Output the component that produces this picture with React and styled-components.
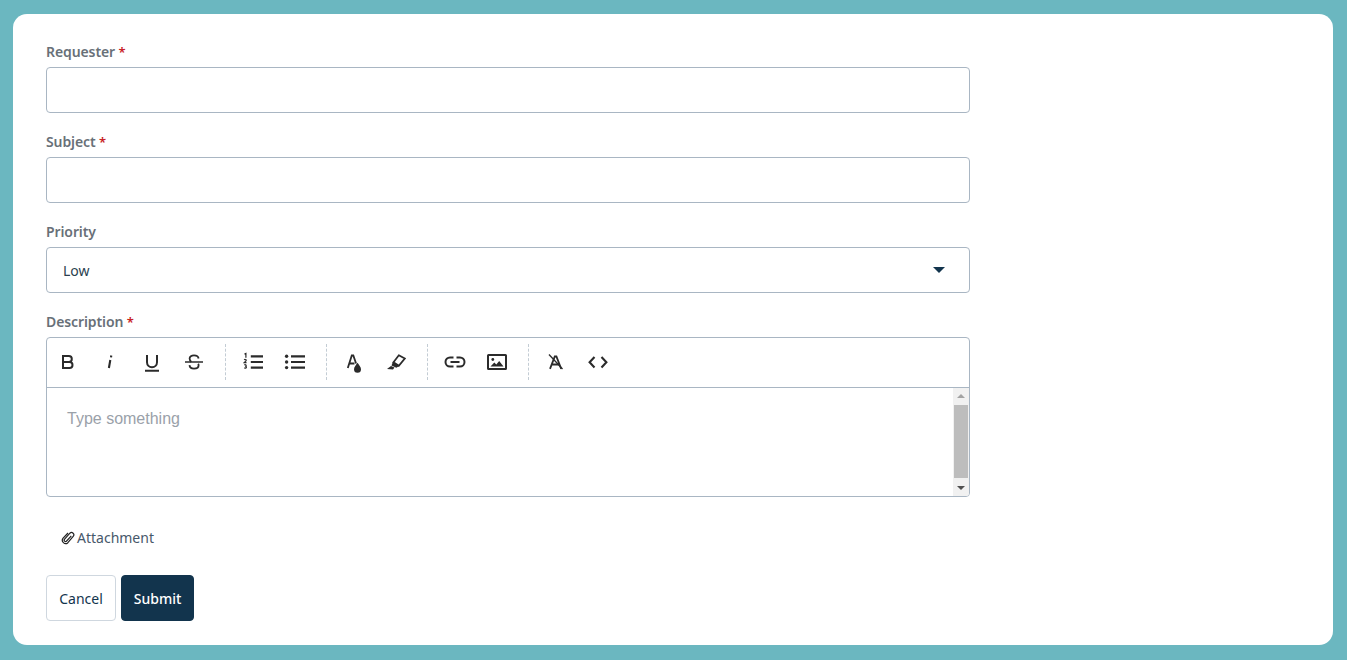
import React from "react";
import styled, { createGlobalStyle } from "styled-components";

const GlobalStyle = createGlobalStyle`
  html, body {
    margin: 0;
    height: 100%;
    background: #6bb7c0;
    font-family: "Noto Sans", "Open Sans", sans-serif;
    overflow: hidden;
  }
`;

const ICON_COLOR = "#2b2b2b";

const Svg = ({ children }) => (
  <svg width="24" height="24" viewBox="0 0 24 24" fill="none" stroke={ICON_COLOR} strokeWidth="2">
    {children}
  </svg>
);

const icons = {
  bold: (
    <Svg>
      <path d="M7 6h5.800a3 3 0 0 1 0 6H7zM7 12h6.500a3 3 0 0 1 0 6H7z" />
    </Svg>
  ),
  italic: (
    <Svg>
      <path d="M12.300 10 10.900 18M13.300 5.500l-.3 1.900" strokeWidth="2.100" />
    </Svg>
  ),
  underline: (
    <Svg>
      <path d="M7 5v7.200a5 5 0 0 0 10 0V5" />
      <path d="M5 20.700h14" />
    </Svg>
  ),
  strike: (
    <Svg>
      <path d="M3 12h18" strokeWidth="1.600" />
      <path d="M16.600 8.500C16.300 6.500 14.400 5.300 12 5.300c-2.500 0-4.400 1.300-4.400 3.200 0 1.300.6 2.400 1.700 3.500M7.500 15.200c.2 2.200 2.100 3.500 4.500 3.500 2.600 0 4.600-1.300 4.600-3.400 0-.6-.1-1.100-.4-1.600" strokeWidth="1.800" />
    </Svg>
  ),
  ordered: (
    <Svg>
      <path d="M9.800 6.300H22M9.800 12H22M9.800 17.600H22" strokeWidth="2.200" />
      <path d="M3.500 4.100 4.900 3.500v4.300M3.200 9.900c.4-.7 2.200-.6 2 .5-.1.700-1.500 1.400-2.100 2.300h2.400M3.300 15c.7-.5 2-.3 1.900.6 0 .5-.5.7-1 .7.700 0 1.200.3 1.200.9 0 1-1.500 1.200-2.200.6" strokeWidth="1.200" />
    </Svg>
  ),
  bullet: (
    <Svg>
      <path d="M8 6.300h14M8 12h14M8 17.600h14" strokeWidth="2.200" />
      <circle cx="3.600" cy="6.300" r="1.700" fill={ICON_COLOR} stroke="none" />
      <circle cx="3.600" cy="12" r="1.700" fill={ICON_COLOR} stroke="none" />
      <circle cx="3.600" cy="17.600" r="1.700" fill={ICON_COLOR} stroke="none" />
    </Svg>
  ),
  color: (
    <Svg>
      <path d="M5.800 18 9.800 5.500h1.500l2.800 8M7.500 13.500h5" strokeWidth="1.800" />
      <path d="M15.500 12.800c1.300 2.200 3.500 4 3.500 6.400a3.500 3.500 0 0 1-7 0c0-2.400 2.100-4.200 3.500-6.400z" fill={ICON_COLOR} stroke="none" />
    </Svg>
  ),
  highlight: (
    <Svg>
      <path d="M14.800 5.300 20.800 8.500l-6 7.300-5.300-3.600z" strokeWidth="1.800" />
      <path d="M8.900 11.700 15.200 16l-2.800 1.800-4.900-2.300z" fill={ICON_COLOR} stroke="none" />
      <path d="M7 16 3 19l6 .4 1.500-1.800z" fill={ICON_COLOR} stroke="none" />
    </Svg>
  ),
  link: (
    <Svg>
      <path d="M10.500 7.500H7a4.500 4.500 0 0 0 0 9h3.500M13.500 7.500H17a4.500 4.500 0 0 1 0 9h-3.500" />
      <path d="M7.500 12h9" />
    </Svg>
  ),
  image: (
    <Svg>
      <rect x="3" y="5" width="18" height="14" rx="0.500" />
      <circle cx="7.800" cy="9.500" r="1.400" fill={ICON_COLOR} stroke="none" />
      <path d="M5.500 16.500 9.300 12.500l2 2 2.900-3.500 4.300 5.500z" fill={ICON_COLOR} stroke="none" />
    </Svg>
  ),
  clean: (
    <Svg>
      <path d="M6 18.800 10.800 6.500h1.600l4.800 12.300M8 14.500h7.500" strokeWidth="1.800" />
      <path d="M5 4.500 18.500 19" strokeWidth="1.300" />
    </Svg>
  ),
  code: (
    <Svg>
      <path d="M8.500 7 3.600 12.300l4.900 5.200M15.500 7l4.900 5.300-4.900 5.200" strokeWidth="2.100" />
    </Svg>
  ),
};

const toolGroups = [
  ["bold", "italic", "underline", "strike"],
  ["ordered", "bullet"],
  ["color", "highlight"],
  ["link", "image"],
  ["clean", "code"],
];

const Card = styled.main`
  box-sizing: border-box;
  width: 1320px;
  height: 631px;
  margin: 14px 0 0 13px;
  padding: 26px 33px 0;
  background: #fff;
  border-radius: 14px;
`;

const Form = styled.form`
  display: flex;
  flex-direction: column;
  width: 924px;
`;

const Field = styled.div`
  margin-bottom: 17px;
`;

const Label = styled.label`
  display: block;
  height: 24px;
  margin-bottom: 3px;
  font-size: 14px;
  line-height: 24px;
  font-weight: 600;
  letter-spacing: -0.1px;
  color: #687078;
`;

const Required = styled.span`
  font-size: 13px;
  color: #c82124;
`;

const Input = styled.input`
  display: block;
  box-sizing: border-box;
  width: 100%;
  height: 46px;
  border: 1px solid #a9b6c3;
  border-radius: 4px;
  background: #fff;
  outline: none;
`;

const Select = styled.div`
  display: flex;
  align-items: center;
  justify-content: space-between;
  box-sizing: border-box;
  height: 46px;
  padding: 0 24px 0 16px;
  border: 1px solid #a9b6c3;
  border-radius: 4px;
  font-size: 14px;
  color: #2c3f4f;
`;

const Caret = styled.span`
  width: 0;
  height: 0;
  border-left: 6px solid transparent;
  border-right: 6px solid transparent;
  border-top: 6px solid #12344d;
`;

const Editor = styled.div`
  box-sizing: border-box;
  height: 160px;
  border: 1px solid #a9b6c3;
  border-radius: 4px;
  overflow: hidden;
`;

const Toolbar = styled.div`
  display: flex;
  box-sizing: border-box;
  height: 50px;
  padding: 6px 0 7px;
  border-bottom: 1px solid #a9b6c3;
`;

const ToolGroup = styled.div`
  display: flex;
  align-items: center;
  margin-right: 6px;
  padding-right: 10px;
  border-right: 1px dashed #c3ccd4;

  &:last-child {
    border-right: 0;
  }
`;

const ToolButton = styled.button`
  display: flex;
  align-items: center;
  justify-content: center;
  width: 42px;
  height: 36px;
  padding: 0;
  border: 0;
  background: none;
`;

const EditorBody = styled.div`
  display: flex;
  height: 108px;
`;

const EditorText = styled.div`
  flex: 1;
  padding: 21px 20px;
  font-family: "Liberation Sans", Arial, sans-serif;
  font-size: 16px;
  line-height: 20px;
  color: #9aa1a9;
`;

const Scrollbar = styled.div`
  display: flex;
  flex-direction: column;
  align-items: center;
  justify-content: space-between;
  box-sizing: border-box;
  width: 16px;
  padding: 0 1px 0 0;
  background: #f1f1f1;
`;

const ScrollArrow = styled.span`
  width: 0;
  height: 0;
  margin: 6px 0;
  border-left: 4px solid transparent;
  border-right: 4px solid transparent;
  ${(p) =>
    p.$up
      ? "border-bottom: 4px solid #a3a3a3;"
      : "border-top: 4px solid #505050;"}
`;

const ScrollThumb = styled.div`
  width: 14px;
  height: 73px;
  margin-bottom: auto;
  margin-top: 1px;
  background: #bdbdbd;
`;

const Attachment = styled.div`
  display: flex;
  align-items: center;
  height: 22px;
  margin: 12px 0 27px 15px;
  gap: 2px;
  font-size: 14px;
  color: #47586a;
`;

const Buttons = styled.div`
  display: flex;
  gap: 5px;
`;

const Button = styled.button`
  box-sizing: border-box;
  height: 46px;
  width: ${(p) => (p.$primary ? "73px" : "70px")};
  padding: 0;
  border: 1px solid ${(p) => (p.$primary ? "#12344d" : "#cfd7df")};
  border-radius: 4px;
  background: ${(p) => (p.$primary ? "#12344d" : "#fff")};
  color: ${(p) => (p.$primary ? "#fff" : "#12344d")};
  font-family: inherit;
  font-size: 14px;
  font-weight: ${(p) => (p.$primary ? 500 : 400)};
`;

const Paperclip = () => (
  <svg width="14" height="16" viewBox="0 0 14 16" fill="none" stroke="#222" strokeWidth="1.200">
    <path d="M10.300 5.800 5.400 11.200a1.400 1.400 0 0 1-2-1.900L8.900 3.200a2.300 2.300 0 0 1 3.300 3.200L6.900 12.700a3.300 3.300 0 0 1-4.800-4.500L7 3" transform="translate(0 1)" />
  </svg>
);

export default function App() {
  return (
    <>
      <GlobalStyle />
      <Card>
        <Form>
          <Field>
            <Label>
              Requester <Required>*</Required>
            </Label>
            <Input />
          </Field>
          <Field>
            <Label>
              Subject <Required>*</Required>
            </Label>
            <Input />
          </Field>
          <Field>
            <Label>Priority</Label>
            <Select>
              Low
              <Caret />
            </Select>
          </Field>
          <Field>
            <Label>
              Description <Required>*</Required>
            </Label>
            <Editor>
              <Toolbar>
                {toolGroups.map((group, i) => (
                  <ToolGroup key={i}>
                    {group.map((name) => (
                      <ToolButton type="button" key={name}>
                        {icons[name]}
                      </ToolButton>
                    ))}
                  </ToolGroup>
                ))}
              </Toolbar>
              <EditorBody>
                <EditorText>Type something</EditorText>
                <Scrollbar>
                  <ScrollArrow $up />
                  <ScrollThumb />
                  <ScrollArrow />
                </Scrollbar>
              </EditorBody>
            </Editor>
          </Field>
          <Attachment>
            <Paperclip />
            Attachment
          </Attachment>
          <Buttons>
            <Button type="button">Cancel</Button>
            <Button type="button" $primary>
              Submit
            </Button>
          </Buttons>
        </Form>
      </Card>
    </>
  );
}
